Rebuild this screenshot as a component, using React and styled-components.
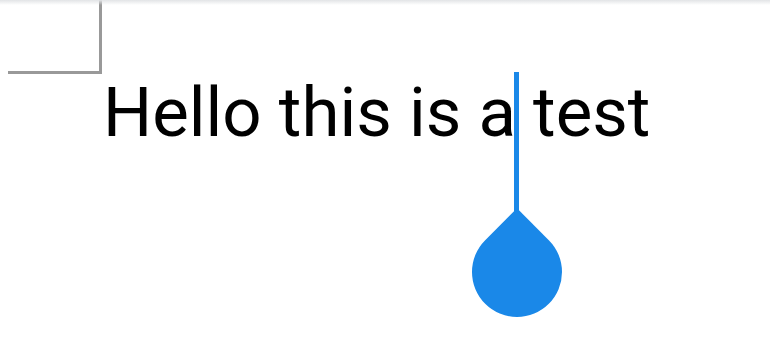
import React from "react";
import styled, { createGlobalStyle } from "styled-components";

const Global = createGlobalStyle`
  html, body { margin: 0; padding: 0; background: #fff; }
  body { width: 770px; height: 354px; overflow: hidden; font-family: Roboto, "Noto Sans", sans-serif; }
`;

const Page = styled.div`
  position: relative;
  width: 770px;
  height: 354px;
  background: #fff;
  &::before {
    content: "";
    position: absolute;
    left: 0; right: 0; top: 0;
    height: 5px;
    background: linear-gradient(#e2e4e6, rgba(255,255,255,0));
  }
`;

const Corner = styled.div`
  margin-left: 8px;
  width: 91px;
  height: 71px;
  border-right: 3px solid #999999;
  border-bottom: 3px solid #999999;
`;

const Line = styled.div`
  margin: -7px 0 0 103px;
  font-size: 69px;
  line-height: 80px;
  color: #000;
  white-space: nowrap;
`;

const CaretAnchor = styled.span`
  position: relative;
  display: inline-block;
  width: 0;
  height: 1em;
`;

const CaretBar = styled.span`
  position: absolute;
  left: -2px;
  top: 5px;
  width: 5px;
  height: 140px;
  background: #1a88e8;
`;

const Handle = styled.span`
  position: absolute;
  left: -44px;
  top: 160px;
  width: 90px;
  height: 90px;
  background: #1a88e8;
  border-radius: 0 50% 50% 50%;
  transform: rotate(45deg);
`;

export default function App() {
  return (
    <>
      <Global />
      <Page>
        <Corner />
        <Line>
          Hello this is a
          <CaretAnchor>
            <CaretBar />
            <Handle />
          </CaretAnchor>{" "}
          test
        </Line>
      </Page>
    </>
  );
}
